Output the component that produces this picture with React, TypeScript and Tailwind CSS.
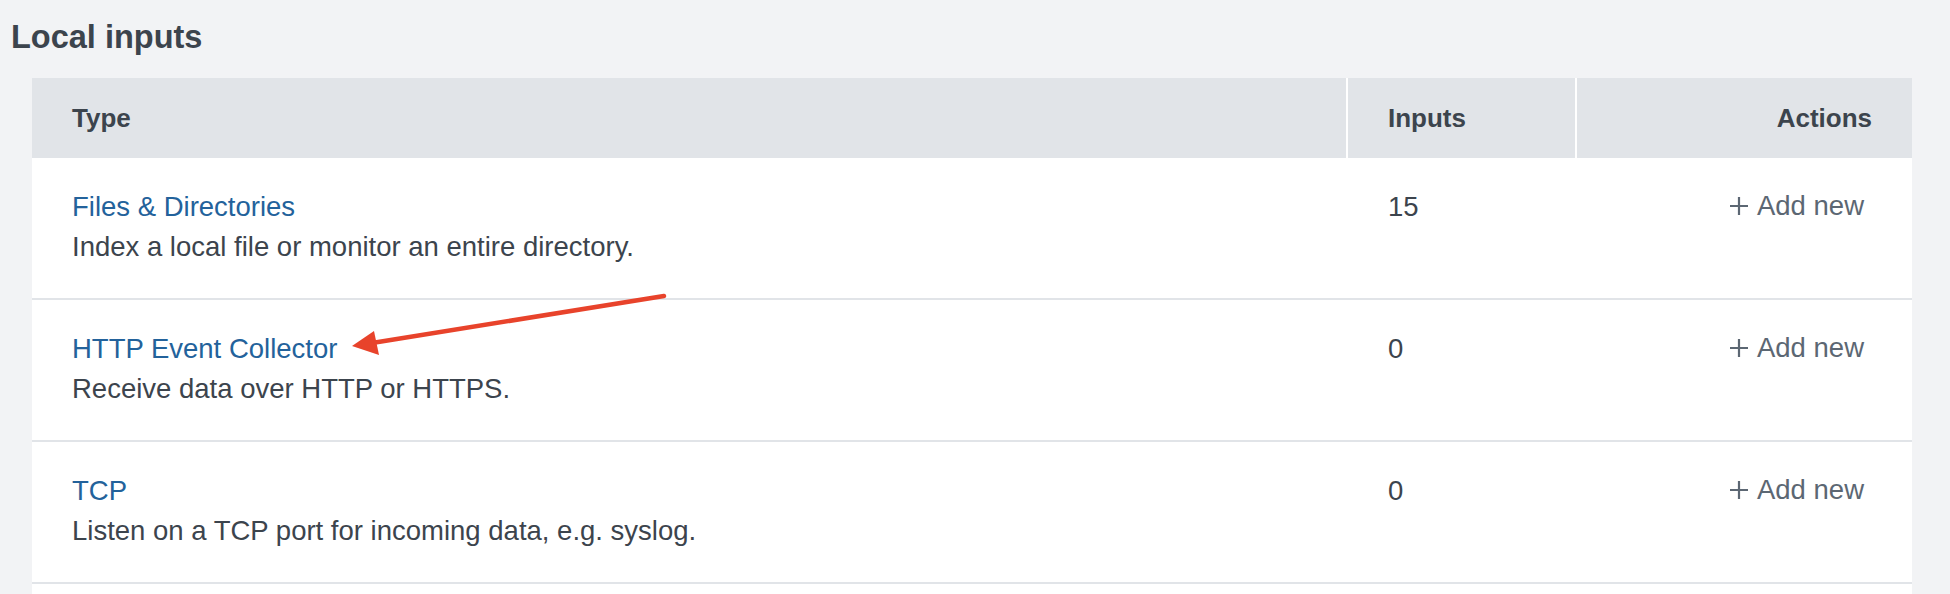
import { Fragment } from 'react';

type InputType = {
  name: string;
  description: string;
  count: number;
};

const inputTypes: InputType[] = [
  { name: 'Files & Directories', description: 'Index a local file or monitor an entire directory.', count: 15 },
  { name: 'HTTP Event Collector', description: 'Receive data over HTTP or HTTPS.', count: 0 },
  { name: 'TCP', description: 'Listen on a TCP port for incoming data, e.g. syslog.', count: 0 },
];

function PlusIcon() {
  return (
    <svg width="20" height="20" viewBox="0 0 20 20" className="shrink-0" aria-hidden="true">
      <path d="M10 1v18M1 10h18" stroke="currentColor" strokeWidth="2.2" fill="none" />
    </svg>
  );
}

export default function App() {
  return (
    <div className="relative h-[594px] overflow-hidden bg-[#f2f3f5] pl-[11px] pr-[38px] pt-[17px] font-['Liberation_Sans',Arial,sans-serif] text-[#3c444d]">
      <h2 className="m-0 text-[32.5px] font-bold leading-[40px]">Local inputs</h2>

      <div className="ml-[21px] mt-[21px] grid grid-cols-[1314px_229px_1fr] bg-white">
        <div className="flex h-[80px] items-center bg-[#e1e4e8] pl-[40px] text-[26px] font-bold leading-[40px]">Type</div>
        <div className="flex h-[80px] items-center border-l-2 border-white bg-[#e1e4e8] pl-[40px] text-[26px] font-bold leading-[40px]">
          Inputs
        </div>
        <div className="flex h-[80px] items-center justify-end border-l-2 border-white bg-[#e1e4e8] pr-[40px] text-[26px] font-bold leading-[40px]">
          Actions
        </div>

        {inputTypes.map((item) => (
          <Fragment key={item.name}>
            <div className="border-b-2 border-[#e1e4e8] pb-[31px] pl-[40px] pt-[29px] text-[27.5px] leading-[40px]">
              <a href="#" className="text-[#23629b] no-underline">
                {item.name}
              </a>
              <p className="m-0">{item.description}</p>
            </div>
            <div className="border-b-2 border-[#e1e4e8] pb-[31px] pl-[42px] pt-[29px] text-[27.5px] leading-[40px]">{item.count}</div>
            <div className="flex items-start justify-end border-b-2 border-[#e1e4e8] pb-[31px] pr-[48px] pt-[29px] text-[27.5px] leading-[40px] text-[#5c6773]">
              <a href="#" className="flex h-[40px] items-center gap-[8px] pb-[2px]">
                <PlusIcon />
                <span>Add new</span>
              </a>
            </div>
          </Fragment>
        ))}

        <div className="col-span-3 h-[40px] bg-white" />
      </div>

      <svg className="pointer-events-none absolute left-0 top-0" width="1950" height="594" aria-hidden="true">
        <line x1="664" y1="296" x2="372" y2="343" stroke="#e8432b" strokeWidth="4.5" strokeLinecap="round" />
        <polygon points="352,346 374,331 379,355" fill="#e8432b" />
      </svg>
    </div>
  );
}
